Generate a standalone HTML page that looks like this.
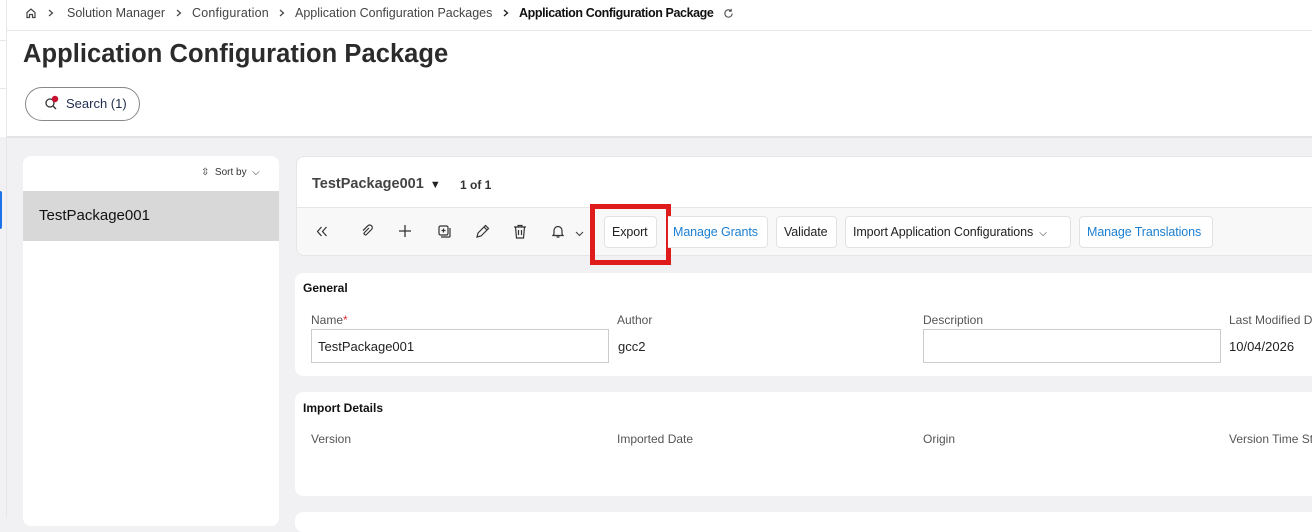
<!DOCTYPE html>
<html><head><style>
*{box-sizing:border-box;margin:0;padding:0}
body{width:1312px;height:517px;overflow:hidden;background:#f1f0f2;font-family:"Liberation Sans",sans-serif;color:#1d1d1d;position:relative}
.abs{position:absolute}
.bc{position:absolute;top:6px;font-size:12.5px;color:#444;white-space:nowrap;letter-spacing:-0.1px}
.btn{position:absolute;top:216px;height:32px;background:#fff;border:1px solid #e2e2e2;border-radius:4px;font-size:12.5px;line-height:30px;padding:0 7px;white-space:nowrap;letter-spacing:-0.1px}
.lbl{position:absolute;font-size:12px;color:#555}
.val{position:absolute;font-size:13px;color:#222}
.card{position:absolute;background:#fff;border-radius:8px}
.ic{position:absolute;top:224px}
</style></head><body>
<div class="abs" style="left:0;top:0;width:1312px;height:137px;background:#fff"></div>
<div class="abs" style="left:6px;top:0;width:1px;height:137px;background:#e6e6e6"></div>
<div class="abs" style="left:6px;top:137px;width:1px;height:380px;background:#e6e6e6"></div>
<div class="abs" style="left:0;top:40px;width:6px;height:1px;background:#e6e6e6"></div>
<div class="abs" style="left:0;top:88px;width:6px;height:1px;background:#e6e6e6"></div>
<div class="abs" style="left:0;top:191px;width:2px;height:38px;background:#1a73e8;border-radius:0 2px 2px 0"></div>
<div class="abs" style="left:7px;top:30px;width:1305px;height:1px;background:#e6e6e6"></div>
<div class="abs" style="left:7px;top:136px;width:1305px;height:2px;background:#e3e3e3"></div>
<svg class="abs" style="left:25px;top:7px" width="12" height="12" viewBox="0 0 12 12" fill="none" stroke="#444" stroke-width="1.2"><path d="M2 5.5L6 2l4 3.5V10.5H7.5V7.5h-3v3H2z"/></svg>
<svg class="abs" style="left:48px;top:9px" width="6" height="8" viewBox="0 0 6 8" fill="none" stroke="#444" stroke-width="1.2"><path d="M1 1l3.5 3L1 7"/></svg>
<div class="bc" style="left:67px;letter-spacing:0">Solution Manager</div>
<svg class="abs" style="left:176px;top:9px" width="6" height="8" viewBox="0 0 6 8" fill="none" stroke="#444" stroke-width="1.2"><path d="M1 1l3.5 3L1 7"/></svg>
<div class="bc" style="left:192px;letter-spacing:0.2px">Configuration</div>
<svg class="abs" style="left:279px;top:9px" width="6" height="8" viewBox="0 0 6 8" fill="none" stroke="#444" stroke-width="1.2"><path d="M1 1l3.5 3L1 7"/></svg>
<div class="bc" style="left:295px;letter-spacing:0">Application Configuration Packages</div>
<svg class="abs" style="left:503px;top:9px" width="6" height="8" viewBox="0 0 6 8" fill="none" stroke="#222" stroke-width="1.4"><path d="M1 1l3.5 3L1 7"/></svg>
<div class="bc" style="left:519px;font-weight:bold;color:#111;letter-spacing:-0.4px">Application Configuration Package</div>
<svg class="abs" style="left:723px;top:8px" width="11" height="11" viewBox="0 0 12 12" fill="none" stroke="#555" stroke-width="1.2"><path d="M10 6a4 4 0 1 1-1.2-2.9M9 1v2.5H6.5"/></svg>
<div class="abs" style="left:23px;top:40px;font-size:25.5px;font-weight:bold;color:#2b2b2b;letter-spacing:0.05px">Application Configuration Package</div>
<div class="abs" style="left:25px;top:87px;width:115px;height:34px;border:1px solid #888;border-radius:17px;background:#fff"></div>
<svg class="abs" style="left:44px;top:94px" width="18" height="18" viewBox="0 0 18 18" fill="none" stroke="#333" stroke-width="1.3"><circle cx="6" cy="9" r="4"/><path d="M9 12l3 3"/><circle cx="11" cy="5" r="3.2" fill="#c8102e" stroke="none"/></svg>
<div class="abs" style="left:66px;top:96px;font-size:13px;color:#1f2d4d">Search (1)</div>

<div class="card" style="left:23px;top:156px;width:256px;height:370px"></div>
<div class="abs" style="left:201px;top:167px;font-size:10px;color:#333">⇳&nbsp; Sort by &nbsp;⌵</div>
<div class="abs" style="left:23px;top:191px;width:256px;height:50px;background:#d8d8d8"></div>
<div class="abs" style="left:39px;top:207px;font-size:15px;color:#111">TestPackage001</div>

<div class="card" style="left:296px;top:156px;width:1030px;height:100px;border:1px solid #e6e6e6"></div>
<div class="abs" style="left:297px;top:207px;width:1015px;height:48px;background:#f8f8f8;border-top:1px solid #e6e6e6;border-radius:0 0 0 8px"></div>
<div class="abs" style="left:312px;top:176px;font-size:14.5px;font-weight:bold;color:#444">TestPackage001<span style="font-size:11px;color:#222">&nbsp;&nbsp;▼</span></div>
<div class="abs" style="left:460px;top:178px;font-size:12px;font-weight:bold;color:#333">1 of 1</div>
<svg class="ic" style="left:316px;top:226px" width="12" height="11" viewBox="0 0 12 11" fill="none" stroke="#333" stroke-width="1.2"><path d="M5.5 1L1.5 5.5l4 4.5M10.5 1l-4 4.5 4 4.5"/></svg>
<svg class="ic" style="left:360px" width="14" height="14" viewBox="0 0 14 14" fill="none" stroke="#333" stroke-width="1.2"><path d="M9 4L4.5 8.5a1.4 1.4 0 0 0 2 2L11.5 5.5a2.6 2.6 0 0 0-3.7-3.7L3 6.6"/></svg>
<svg class="ic" style="left:398px" width="14" height="14" viewBox="0 0 14 14" stroke="#333" stroke-width="1.3"><path d="M7 1v12M1 7h12"/></svg>
<svg class="ic" style="left:437px" width="15" height="15" viewBox="0 0 15 15" fill="none" stroke="#333" stroke-width="1.2"><rect x="2" y="2" width="9" height="9" rx="1.5"/><path d="M4 13h8a1 1 0 0 0 1-1V4M6.5 4.5v4M4.5 6.5h4"/></svg>
<svg class="ic" style="left:475px" width="15" height="15" viewBox="0 0 15 15" fill="none" stroke="#333" stroke-width="1.2"><path d="M2 13l1-4 7.5-7.5 3 3L6 12z M9 3l3 3"/></svg>
<svg class="ic" style="left:513px" width="14" height="15" viewBox="0 0 14 15" fill="none" stroke="#333" stroke-width="1.2"><path d="M1 3h12M5 3V1.5h4V3M2.5 3l1 11h7l1-11M5.5 6v5M8.5 6v5"/></svg>
<svg class="ic" style="left:551px" width="14" height="15" viewBox="0 0 14 15" fill="none" stroke="#333" stroke-width="1.2"><path d="M3 10V6.5a4 4 0 0 1 8 0V10l1 1.5H2zM5.5 13h3"/></svg>
<svg class="ic" style="left:575px;top:231px" width="9" height="6" viewBox="0 0 9 6" fill="none" stroke="#444" stroke-width="1.1"><path d="M1 1l3.5 3.5L8 1"/></svg>
<div class="btn" style="left:604px;color:#222;width:53px">Export</div>
<div class="abs" style="left:590px;top:204px;width:81px;height:61px;border:5px solid #e01b1b"></div>
<div class="btn" style="left:668px;color:#1b7fd1;border-left:none;border-radius:0 4px 4px 0;padding-left:5px;width:100px">Manage Grants</div>
<div class="btn" style="left:776px;color:#222;width:61px">Validate</div>
<div class="btn" style="left:845px;width:226px;color:#222">Import Application Configurations <span style="font-size:10px">&nbsp;⌵</span></div>
<div class="btn" style="left:1079px;color:#1b7fd1;width:134px">Manage Translations</div>

<div class="card" style="left:295px;top:273px;width:1030px;height:103px"></div>
<div class="abs" style="left:303px;top:281px;font-size:12px;font-weight:bold;color:#111">General</div>
<div class="lbl" style="left:311px;top:313px">Name<span style="color:#d33">*</span></div>
<div class="abs" style="left:311px;top:329px;width:298px;height:34px;border:1px solid #ccc;background:#fff"></div>
<div class="val" style="left:318px;top:339px">TestPackage001</div>
<div class="lbl" style="left:617px;top:313px">Author</div>
<div class="val" style="left:618px;top:339px">gcc2</div>
<div class="lbl" style="left:923px;top:313px">Description</div>
<div class="abs" style="left:923px;top:329px;width:298px;height:34px;border:1px solid #ccc;background:#fff"></div>
<div class="lbl" style="left:1229px;top:313px;white-space:nowrap">Last Modified Date</div>
<div class="val" style="left:1229px;top:339px">10/04/2026</div>

<div class="card" style="left:295px;top:392px;width:1030px;height:104px"></div>
<div class="abs" style="left:303px;top:401px;font-size:12px;font-weight:bold;color:#111">Import Details</div>
<div class="lbl" style="left:311px;top:432px">Version</div>
<div class="lbl" style="left:617px;top:432px">Imported Date</div>
<div class="lbl" style="left:923px;top:432px">Origin</div>
<div class="lbl" style="left:1229px;top:432px;white-space:nowrap">Version Time Stamp</div>
<div class="card" style="left:295px;top:512px;width:1030px;height:20px"></div>
</body></html>
